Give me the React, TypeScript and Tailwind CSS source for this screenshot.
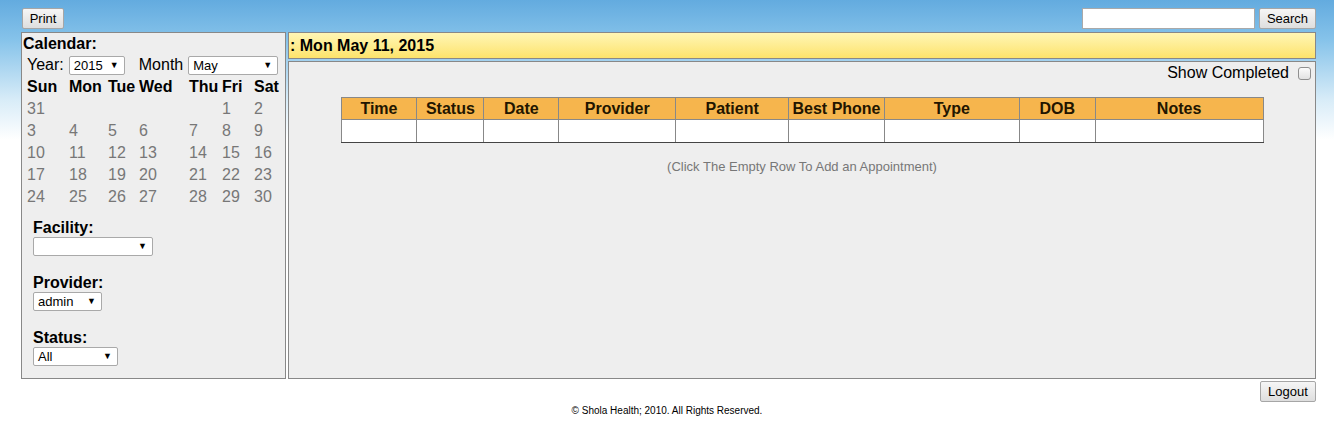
import React from "react";

const font = { fontFamily: '"Liberation Sans", Arial, sans-serif' };

function Select({ w, value }: { w: number; value: string }) {
  return (
    <div
      className="relative flex h-[19px] items-center border border-[#a9a9a9] bg-white rounded-[2px] pl-[4px] text-[13px] text-black leading-none"
      style={{ width: w }}
    >
      <span>{value}</span>
      <span className="absolute right-[5px] top-[4px] text-[9px] leading-none">▼</span>
    </div>
  );
}

function Btn({ children, w }: { children: React.ReactNode; w: number }) {
  return (
    <div
      className="flex h-[21px] items-center justify-center rounded-[2px] border border-[#a6a6a6] bg-gradient-to-b from-[#f6f6f6] to-[#dedede] text-[13px] text-black"
      style={{ width: w }}
    >
      {children}
    </div>
  );
}

const dayCols = "grid-cols-[42px_39px_31px_50px_33px_32px_32px]";

const weeks = [
  ["31", "", "", "", "", "1", "2"],
  ["3", "4", "5", "6", "7", "8", "9"],
  ["10", "11", "12", "13", "14", "15", "16"],
  ["17", "18", "19", "20", "21", "22", "23"],
  ["24", "25", "26", "27", "28", "29", "30"],
];

const cols: [string, number][] = [
  ["Time", 76],
  ["Status", 67],
  ["Date", 75],
  ["Provider", 117],
  ["Patient", 113],
  ["Best Phone", 96],
  ["Type", 135],
  ["DOB", 76],
  ["Notes", 168],
];

export default function App() {
  return (
    <div
      className="h-[432px] w-full bg-[linear-gradient(to_bottom,#63abdf_0px,#86c3ea_40px,#d8ecf8_100px,#ffffff_140px)]"
      style={font}
    >
      {/* top bar */}
      <div className="flex items-start justify-between pl-[22px] pr-[18px] pt-[8px]">
        <Btn w={42}>Print</Btn>
        <div className="flex gap-[4px]">
          <div className="h-[21px] w-[173px] border border-[#a9a9a9] bg-white" />
          <Btn w={57}>Search</Btn>
        </div>
      </div>

      {/* main */}
      <div className="mt-[3px] flex gap-[2px] pl-[21px] pr-[18px]">
        {/* left panel */}
        <div className="h-[347px] w-[265px] shrink-0 border border-[#888] bg-[#eeeeee] text-black">
          <div className="pl-[1px] pt-[1px] text-[16px] font-bold leading-[20px]">Calendar:</div>
          <div className="flex h-[22px] items-center pl-[5px] text-[16px]">
            <span>Year:</span>
            <div className="ml-[5px]">
              <Select w={56} value="2015" />
            </div>
            <span className="ml-[14px]">Month</span>
            <div className="ml-[5px]">
              <Select w={90} value="May" />
            </div>
          </div>
          <div className={`grid ${dayCols} pl-[5px] text-[16px] leading-[22px]`}>
            {["Sun", "Mon", "Tue", "Wed", "Thu", "Fri", "Sat"].map((d) => (
              <div key={d} className="font-bold">
                {d}
              </div>
            ))}
            {weeks.flat().map((d, i) => (
              <div key={i} className="text-[#777]">
                {d}
              </div>
            ))}
          </div>
          <div className="mt-[11px] flex flex-col gap-[18px] pl-[11px]">
            <div>
              <div className="text-[16px] font-bold leading-[18px]">Facility:</div>
              <Select w={120} value="" />
            </div>
            <div>
              <div className="text-[16px] font-bold leading-[18px]">Provider:</div>
              <Select w={69} value="admin" />
            </div>
            <div>
              <div className="text-[16px] font-bold leading-[18px]">Status:</div>
              <Select w={85} value="All" />
            </div>
          </div>
        </div>

        {/* right column */}
        <div className="flex flex-1 flex-col gap-[2px]">
          <div className="flex h-[27px] items-center border border-[#888] bg-gradient-to-b from-[#fff6b4] to-[#fde36a] pl-[1px] text-[16px] font-bold text-black">
            : Mon May 11, 2015
          </div>
          <div className="h-[318px] border border-[#888] bg-[#eeeeee]">
            <div className="flex items-center justify-end gap-[9px] pr-[4px] pt-[2px] text-[16px] leading-[18px] text-black">
              <span>Show Completed</span>
              <span className="h-[13px] w-[13px] rounded-[3px] border border-[#8f8f8f] bg-gradient-to-b from-[#fbfbfb] to-[#e2e2e2]" />
            </div>
            <div className="mt-[15px] flex justify-center">
              <table className="border-collapse border border-[#555]" style={{ width: 923 }}>
                <thead>
                  <tr className="h-[22px] bg-[#f6b54d]">
                    {cols.map(([c, w]) => (
                      <th
                        key={c}
                        className="border border-[#888] p-0 text-center text-[16px] font-bold leading-[20px] text-[#221500]"
                        style={{ width: w }}
                      >
                        {c}
                      </th>
                    ))}
                  </tr>
                </thead>
                <tbody>
                  <tr className="h-[23px] bg-white">
                    {cols.map(([c]) => (
                      <td key={c} className="border border-[#888] border-b-[#444] p-0" />
                    ))}
                  </tr>
                </tbody>
              </table>
            </div>
            <div className="mt-[14px] text-center text-[13px] text-[#777]">
              (Click The Empty Row To Add an Appointment)
            </div>
          </div>
        </div>
      </div>

      {/* footer */}
      <div className="mt-[2px] flex justify-end pr-[18px]">
        <Btn w={56}>Logout</Btn>
      </div>
      <div className="mt-[1px] text-center text-[10px] text-black">
        © Shola Health; 2010. All Rights Reserved.
      </div>
    </div>
  );
}
